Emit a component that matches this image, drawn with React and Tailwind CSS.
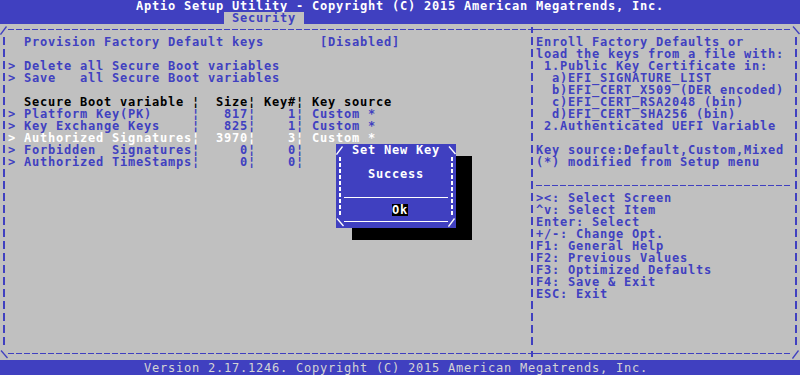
import React from 'react';

// text-mode Aptio setup screen: 100 cols x 8px, rows of 12px

const VBar = () => (
    <div className="ml-[3px] w-[2px] h-full bg-[image:repeating-linear-gradient(180deg,transparent_0_1px,#4040c0_1px_9px,transparent_9px_12px)]" />
);

const DlgBar = () => (
    <div className="ml-[3px] w-[2px] h-full bg-[image:repeating-linear-gradient(180deg,transparent_0_1px,#ffffff_1px_5px,transparent_5px_6px)]" />
);

const HLine = () => (
    <div className="h-[12px] pt-[5px]">
        <div className="h-px w-full bg-[image:repeating-linear-gradient(90deg,#4040c0_0_6px,transparent_6px_8px)]" />
    </div>
);

const Corner = ({ dir, color = '#4040c0' }) => (
    <svg width="8" height="12" viewBox="0 0 8 12" className="block">
        {dir === '/' ? (
            <line x1="0.5" y1="10.5" x2="6.5" y2="2.5" stroke={color} strokeWidth="1.3" />
        ) : (
            <line x1="1" y1="2.5" x2="7.5" y2="10" stroke={color} strokeWidth="1.3" />
        )}
    </svg>
);

const Plus = () => (
    <svg width="8" height="12" viewBox="0 0 8 12" className="block">
        <line x1="0" y1="5.5" x2="8" y2="5.5" stroke="#4040c0" strokeWidth="1" />
        <line x1="4" y1="3" x2="4" y2="9" stroke="#4040c0" strokeWidth="2" />
    </svg>
);

const Row = ({ children, className = '' }) => (
    <div className={`h-[12px] pt-px leading-[11px] ${className}`}>{children}</div>
);

const leftRows = [
    { t: '  Provision Factory Default keys       [Disabled]' },
    { t: '' },
    { t: '> Delete all Secure Boot variables' },
    { t: '> Save   all Secure Boot variables' },
    { t: '' },
    { head: true, t: '  Secure Boot variable ¦  Size¦ Key#¦ Key source' },
    { t: '> Platform Key(PK)     ¦   817¦    1¦ Custom *' },
    { t: '> Key Exchange Keys    ¦   825¦    1¦ Custom *' },
    { sel: true, t: '> Authorized Signatures¦  3970¦    3¦ Custom *' },
    { t: '> Forbidden  Signatures¦     0¦    0¦' },
    { t: '> Authorized TimeStamps¦     0¦    0¦' },
];

const helpTop = [
    'Enroll Factory Defaults or',
    'load the keys from a file with:',
    ' 1.Public Key Certificate in:',
    '  a)EFI_SIGNATURE_LIST',
    '  b)EFI_CERT_X509 (DER encoded)',
    '  c)EFI_CERT_RSA2048 (bin)',
    '  d)EFI_CERT_SHA256 (bin)',
    ' 2.Authenticated UEFI Variable',
    '',
    'Key source:Default,Custom,Mixed',
    '(*) modified from Setup menu',
    '',
];

const keys = [
    '><: Select Screen',
    '^v: Select Item',
    'Enter: Select',
    '+/-: Change Opt.',
    'F1: General Help',
    'F2: Previous Values',
    'F3: Optimized Defaults',
    'F4: Save & Exit',
    'ESC: Exit',
];

const Dialog = () => (
    <div className="absolute left-[336px] top-[144px] w-[120px] h-[84px] bg-[#4040c0] shadow-[16px_12px_0_#000] text-white grid grid-cols-[8px_104px_8px] grid-rows-[repeat(7,12px)]">
        <Corner dir="/" color="#fff" />
        <Row> Set New Key</Row>
        <Corner dir="\" color="#fff" />
        <div className="row-span-5"><DlgBar /></div>
        <div className="row-span-5 flex flex-col">
            <Row />
            <Row>   Success</Row>
            <Row />
            <div className="h-[12px] pt-[5px]">
                <div className="h-px w-full bg-white" />
            </div>
            <div className="h-[12px]">      <span className="inline-block h-[12px] pt-px leading-[11px] bg-black">Ok</span></div>
        </div>
        <div className="row-span-5"><DlgBar /></div>
        <Corner dir="\" color="#fff" />
        <div className="h-[12px] pt-[5px]">
            <div className="h-px w-full bg-white" />
        </div>
        <Corner dir="/" color="#fff" />
    </div>
);

export default function App() {
    return (
        <div className="relative w-[800px] h-[375px] overflow-hidden bg-[#c0c0c0] text-[#4040c0] font-['DejaVu_Sans_Mono',monospace] font-bold text-[12px] tracking-[0.775px] leading-[12px] whitespace-pre">
            {/* Header */}
            <div className="h-[24px] bg-[#4040c0]">
                <Row className="pl-[136px] text-white">Aptio Setup Utility - Copyright (C) 2015 American Megatrends, Inc.</Row>
                <div className="h-[12px] pl-[224px]">
                    <span className="inline-block h-[12px] pt-px leading-[11px] bg-[#c0c0c0] px-[8px]">Security</span>
                </div>
            </div>

            {/* Frame */}
            <div className="grid grid-cols-[8px_520px_8px_256px_8px] grid-rows-[12px_312px_12px]">
                <Corner dir="/" />
                <HLine />
                <Plus />
                <HLine />
                <Corner dir="\" />

                <VBar />
                <div className="flex flex-col">
                    {leftRows.map((r, i) => (
                        <Row key={i} className={r.head ? 'text-black' : r.sel ? 'text-white' : ''}>{r.t}</Row>
                    ))}
                </div>
                <VBar />
                <div className="flex flex-col">
                    {helpTop.map((t, i) => (
                        <Row key={i}>{t}</Row>
                    ))}
                    <HLine />
                    {keys.map((t, i) => (
                        <Row key={i}>{t}</Row>
                    ))}
                </div>
                <VBar />

                <Corner dir="\" />
                <HLine />
                <Plus />
                <HLine />
                <Corner dir="/" />
            </div>

            {/* Footer */}
            <div className="h-[15px] bg-[#4040c0] pl-[144px] pt-[2px] font-normal text-[#d4d4d4] leading-[12px]">
                Version 2.17.1246. Copyright (C) 2015 American Megatrends, Inc.
            </div>

            <Dialog />
        </div>
    );
}
